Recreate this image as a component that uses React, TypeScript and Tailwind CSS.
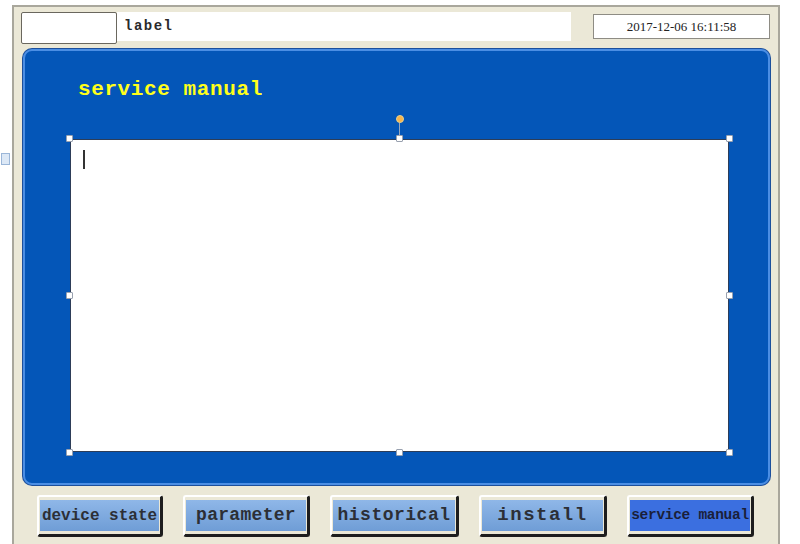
import React from 'react';

const buttons = [
  { label: 'device state', w: 'w-[126px]', text: 'text-[16px]', active: false },
  { label: 'parameter', w: 'w-[127px]', text: 'text-[18px] tracking-[0.3px]', active: false },
  { label: 'historical', w: 'w-[129px]', text: 'text-[18px] tracking-[0.5px]', active: false },
  { label: 'install', w: 'w-[128px]', text: 'text-[19px] tracking-[1.5px]', active: false },
  { label: 'service manual', w: 'w-[127px]', text: 'text-[14.5px] tracking-[-0.3px]', active: true },
];

function Handle() {
  return <div className="w-[7px] h-[7px] bg-white border border-gray-400 rounded-[1px]" />;
}

export default function App() {
  return (
    <div className="relative w-[800px] h-[544px] bg-white overflow-hidden flex pl-[12px] pt-[5px]">
      {/* stray selection marker on the left */}
      <div className="absolute left-[1px] top-[153px] w-[9px] h-[12px] border border-[#9bb6d8] bg-[#dce8f6]" />

      <div className="w-[768px] flex flex-col bg-[#ebe8d7] border-t-2 border-l-2 border-r-2 border-[#a9a79c] pl-[7px] pr-[8px]">
        {/* header row */}
        <div className="flex items-start h-[40px] pt-[5px]">
          <div className="w-[96px] h-[32px] bg-white border border-[#6a675e] rounded-[2px]" />
          <div className="w-[454px] h-[29px] bg-white flex items-center pl-[7px] font-['Liberation_Mono',monospace] font-bold text-[14px] tracking-[1.5px] text-[#2a2a2a]">
            label
          </div>
          <div className="ml-[22px] mt-[2px] w-[177px] h-[25px] bg-white border border-[#8e8c84] flex items-center justify-center font-['Liberation_Serif',serif] text-[13px] text-[#222]">
            2017-12-06 16:11:58
          </div>
        </div>

        {/* blue panel */}
        <div className="mt-[2px] ml-[2px] w-[747px] h-[436px] rounded-[9px] bg-[#0456b8] border-2 border-[#4b8ee4] shadow-[0_0_0_1px_#1c4f9c] flex flex-col pl-[45px]">
          <div className="h-[64px] pt-[25px] pl-[8px] font-['Liberation_Mono',monospace] font-bold text-[21px] leading-[28px] tracking-[0.6px] text-[#ffff1a]">
            service manual
          </div>

          {/* rotate handle */}
          <div className="w-[659px] h-[24px] flex flex-col items-center">
            <div className="w-[8px] h-[8px] rounded-full bg-[#f7b44a] border border-[#e7d090]" />
            <div className="w-px flex-1 bg-[#9aa8bb]" />
          </div>

          <div className="relative w-[659px] h-[313px] bg-white border border-[#2d3d58] pt-[10px] pl-[12px]">
            {/* selection handles overlay */}
            <div className="absolute inset-[-5px] flex flex-col justify-between pointer-events-none">
              <div className="flex justify-between"><Handle /><Handle /><Handle /></div>
              <div className="flex justify-between"><Handle /><Handle /></div>
              <div className="flex justify-between"><Handle /><Handle /><Handle /></div>
            </div>
            {/* caret */}
            <div className="w-[2px] h-[19px] bg-[#333]" />
          </div>
        </div>

        {/* bottom buttons */}
        <div className="flex items-start gap-[20px] pl-[16px] pt-[10px]">
          {buttons.map((b) => (
            <div
              key={b.label}
              className={`${b.w} h-[42px] rounded-[3px] border-t-2 border-l-2 border-white border-b-[3px] border-r-[3px] border-b-[#1d1d1d] border-r-[#1d1d1d] px-[1px] py-[3px]`}
            >
              <div
                className={`w-full h-full flex items-center justify-center whitespace-nowrap overflow-visible font-['Liberation_Mono',monospace] font-bold ${b.text} ${
                  b.active
                    ? 'bg-[#3b6fe0] text-[#1a1f3a]'
                    : 'bg-gradient-to-b from-[#8fb7e8] to-[#6f9dd6] text-[#2c2f36]'
                }`}
              >
                {b.label}
              </div>
            </div>
          ))}
        </div>
      </div>
    </div>
  );
}
